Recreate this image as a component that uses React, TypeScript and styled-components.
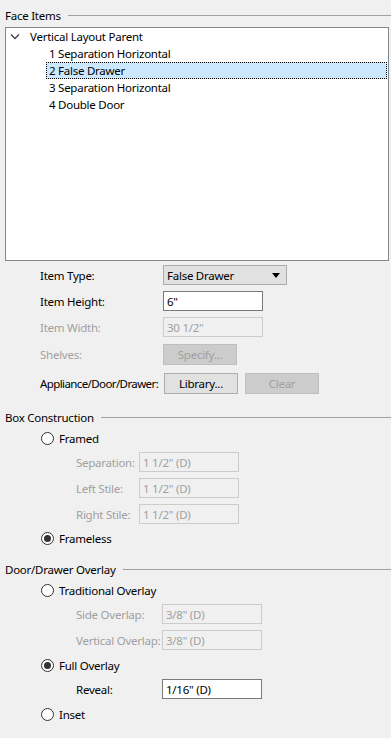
import styled, { createGlobalStyle } from "styled-components";

const GlobalStyle = createGlobalStyle`
  html, body {
    margin: 0;
    padding: 0;
    background: #f0f0f0;
  }
  body {
    font-family: "Noto Sans", "Segoe UI", sans-serif;
    font-size: 11.5px;
    letter-spacing: -0.25px;
    color: #000;
  }
`;

const Panel = styled.div`
  width: 391px;
  height: 738px;
  overflow: hidden;
  display: flex;
  flex-direction: column;
`;

const GroupHeader = styled.div<{ $top: number }>`
  display: flex;
  align-items: center;
  height: 16px;
  margin-top: ${(p) => p.$top}px;
  padding-left: 5px;
  gap: 7px;
  white-space: nowrap;

  &::after {
    content: "";
    flex: 1;
    height: 1px;
    background: #a0a0a0;
  }
`;

const TreeBox = styled.div`
  margin: 4px 0 0 5px;
  width: 384px;
  height: 234px;
  box-sizing: border-box;
  border: 1px solid #828790;
  background: #fff;
  display: flex;
  flex-direction: column;
`;

const TreeRow = styled.div<{ $level: number; $selected?: boolean }>`
  height: 17px;
  box-sizing: border-box;
  display: flex;
  align-items: center;
  margin-left: ${(p) => (p.$level === 0 ? 0 : 40)}px;
  margin-right: 1px;
  padding-left: ${(p) => (p.$level === 0 ? 0 : 2)}px;
  white-space: nowrap;
  background: ${(p) => (p.$selected ? "#cce8ff" : "transparent")};
  border: 1px dotted ${(p) => (p.$selected ? "#000" : "transparent")};
`;

const Expander = styled.span`
  width: 15px;
  display: flex;
  align-items: center;
  justify-content: center;
  margin-right: 8px;
`;

const FieldRow = styled.div<{ $top: number; $indent: number; $h?: number }>`
  display: flex;
  align-items: center;
  height: ${(p) => p.$h ?? 20}px;
  margin-top: ${(p) => p.$top}px;
  padding-left: ${(p) => p.$indent}px;
  white-space: nowrap;
`;

const Label = styled.span<{ $width: number; $disabled?: boolean; $tight?: boolean }>`
  width: ${(p) => p.$width}px;
  flex-shrink: 0;
  color: ${(p) => (p.$disabled ? "#a0a0a0" : "#000")};
  letter-spacing: ${(p) => (p.$tight ? "-0.6px" : "inherit")};
`;

const TextBox = styled.div<{ $width: number; $disabled?: boolean }>`
  width: ${(p) => p.$width}px;
  height: 20px;
  box-sizing: border-box;
  display: flex;
  align-items: center;
  padding-left: 3px;
  border: 1px solid ${(p) => (p.$disabled ? "#cccccc" : "#7a7a7a")};
  background: ${(p) => (p.$disabled ? "#f0f0f0" : "#fff")};
  color: ${(p) => (p.$disabled ? "#a0a0a0" : "#000")};
`;

const Dropdown = styled.div`
  width: 124px;
  height: 20px;
  box-sizing: border-box;
  display: flex;
  align-items: center;
  justify-content: space-between;
  padding: 0 6px 0 3px;
  border: 1px solid #acacac;
  background: #e1e1e1;
`;

const Button = styled.div<{ $disabled?: boolean; $gap?: number }>`
  width: 74px;
  height: 21px;
  box-sizing: border-box;
  display: flex;
  align-items: center;
  justify-content: center;
  margin-left: ${(p) => p.$gap ?? 0}px;
  border: 1px solid ${(p) => (p.$disabled ? "#bfbfbf" : "#adadad")};
  background: ${(p) => (p.$disabled ? "#cccccc" : "#e1e1e1")};
  color: ${(p) => (p.$disabled ? "#a0a0a0" : "#000")};
`;

const RadioRow = styled.div<{ $top: number }>`
  display: flex;
  align-items: center;
  height: 16px;
  margin-top: ${(p) => p.$top}px;
  padding-left: 41px;
  gap: 5px;
  white-space: nowrap;
`;

const RadioCircle = styled.span<{ $checked?: boolean }>`
  width: 13px;
  height: 13px;
  box-sizing: border-box;
  border-radius: 50%;
  border: 1px solid #333;
  background: #fff;
  display: flex;
  align-items: center;
  justify-content: center;

  &::after {
    content: "";
    width: 7px;
    height: 7px;
    border-radius: 50%;
    background: ${(p) => (p.$checked ? "#333" : "transparent")};
  }
`;

const treeItems = [
  "1 Separation Horizontal",
  "2 False Drawer",
  "3 Separation Horizontal",
  "4 Double Door",
];

function Radio({ label, checked, top }: { label: string; checked?: boolean; top: number }) {
  return (
    <RadioRow $top={top}>
      <RadioCircle $checked={checked} />
      <span>{label}</span>
    </RadioRow>
  );
}

function SubField({
  label,
  value,
  top,
  labelWidth,
  disabled,
}: {
  label: string;
  value: string;
  top: number;
  labelWidth: number;
  disabled?: boolean;
}) {
  return (
    <FieldRow $top={top} $indent={76}>
      <Label $width={labelWidth} $disabled={disabled}>
        {label}
      </Label>
      <TextBox $width={100} $disabled={disabled}>
        {value}
      </TextBox>
    </FieldRow>
  );
}

export default function App() {
  return (
    <Panel>
      <GlobalStyle />
      <GroupHeader $top={7}>Face Items</GroupHeader>
      <TreeBox>
        <TreeRow $level={0}>
          <Expander>
            <svg width="10" height="7" viewBox="0 0 10 7">
              <path d="M1 1.5 L5 5.5 L9 1.5" fill="none" stroke="#404040" strokeWidth="1.3" />
            </svg>
          </Expander>
          Vertical Layout Parent
        </TreeRow>
        {treeItems.map((item, i) => (
          <TreeRow key={item} $level={1} $selected={i === 1}>
            {item}
          </TreeRow>
        ))}
      </TreeBox>

      <FieldRow $top={4} $indent={40}>
        <Label $width={123}>Item Type:</Label>
        <Dropdown>
          <span>False Drawer</span>
          <svg width="8" height="5" viewBox="0 0 8 5">
            <path d="M0 0 H8 L4 5 Z" fill="#000" />
          </svg>
        </Dropdown>
      </FieldRow>
      <FieldRow $top={6} $indent={40}>
        <Label $width={123}>Item Height:</Label>
        <TextBox $width={100}>6"</TextBox>
      </FieldRow>
      <FieldRow $top={6} $indent={40}>
        <Label $width={123} $disabled>
          Item Width:
        </Label>
        <TextBox $width={100} $disabled>
          30 1/2"
        </TextBox>
      </FieldRow>
      <FieldRow $top={7} $indent={40} $h={21}>
        <Label $width={123} $disabled>
          Shelves:
        </Label>
        <Button $disabled>Specify...</Button>
      </FieldRow>
      <FieldRow $top={8} $indent={40} $h={21}>
        <Label $width={124} $tight>
          Appliance/Door/Drawer:
        </Label>
        <Button>Library...</Button>
        <Button $disabled $gap={7}>
          Clear
        </Button>
      </FieldRow>

      <GroupHeader $top={15}>Box Construction</GroupHeader>
      <Radio label="Framed" top={5} />
      <SubField label="Separation:" value={'1 1/2" (D)'} top={6} labelWidth={63} disabled />
      <SubField label="Left Stile:" value={'1 1/2" (D)'} top={6} labelWidth={63} disabled />
      <SubField label="Right Stile:" value={'1 1/2" (D)'} top={6} labelWidth={63} disabled />
      <Radio label="Frameless" checked top={6} />

      <GroupHeader $top={15}>Door/Drawer Overlay</GroupHeader>
      <Radio label="Traditional Overlay" top={5} />
      <SubField label="Side Overlap:" value={'3/8" (D)'} top={6} labelWidth={86} disabled />
      <SubField label="Vertical Overlap:" value={'3/8" (D)'} top={6} labelWidth={86} disabled />
      <Radio label="Full Overlay" checked top={7} />
      <SubField label="Reveal:" value={'1/16" (D)'} top={6} labelWidth={86} />
      <Radio label="Inset" top={7} />
    </Panel>
  );
}
